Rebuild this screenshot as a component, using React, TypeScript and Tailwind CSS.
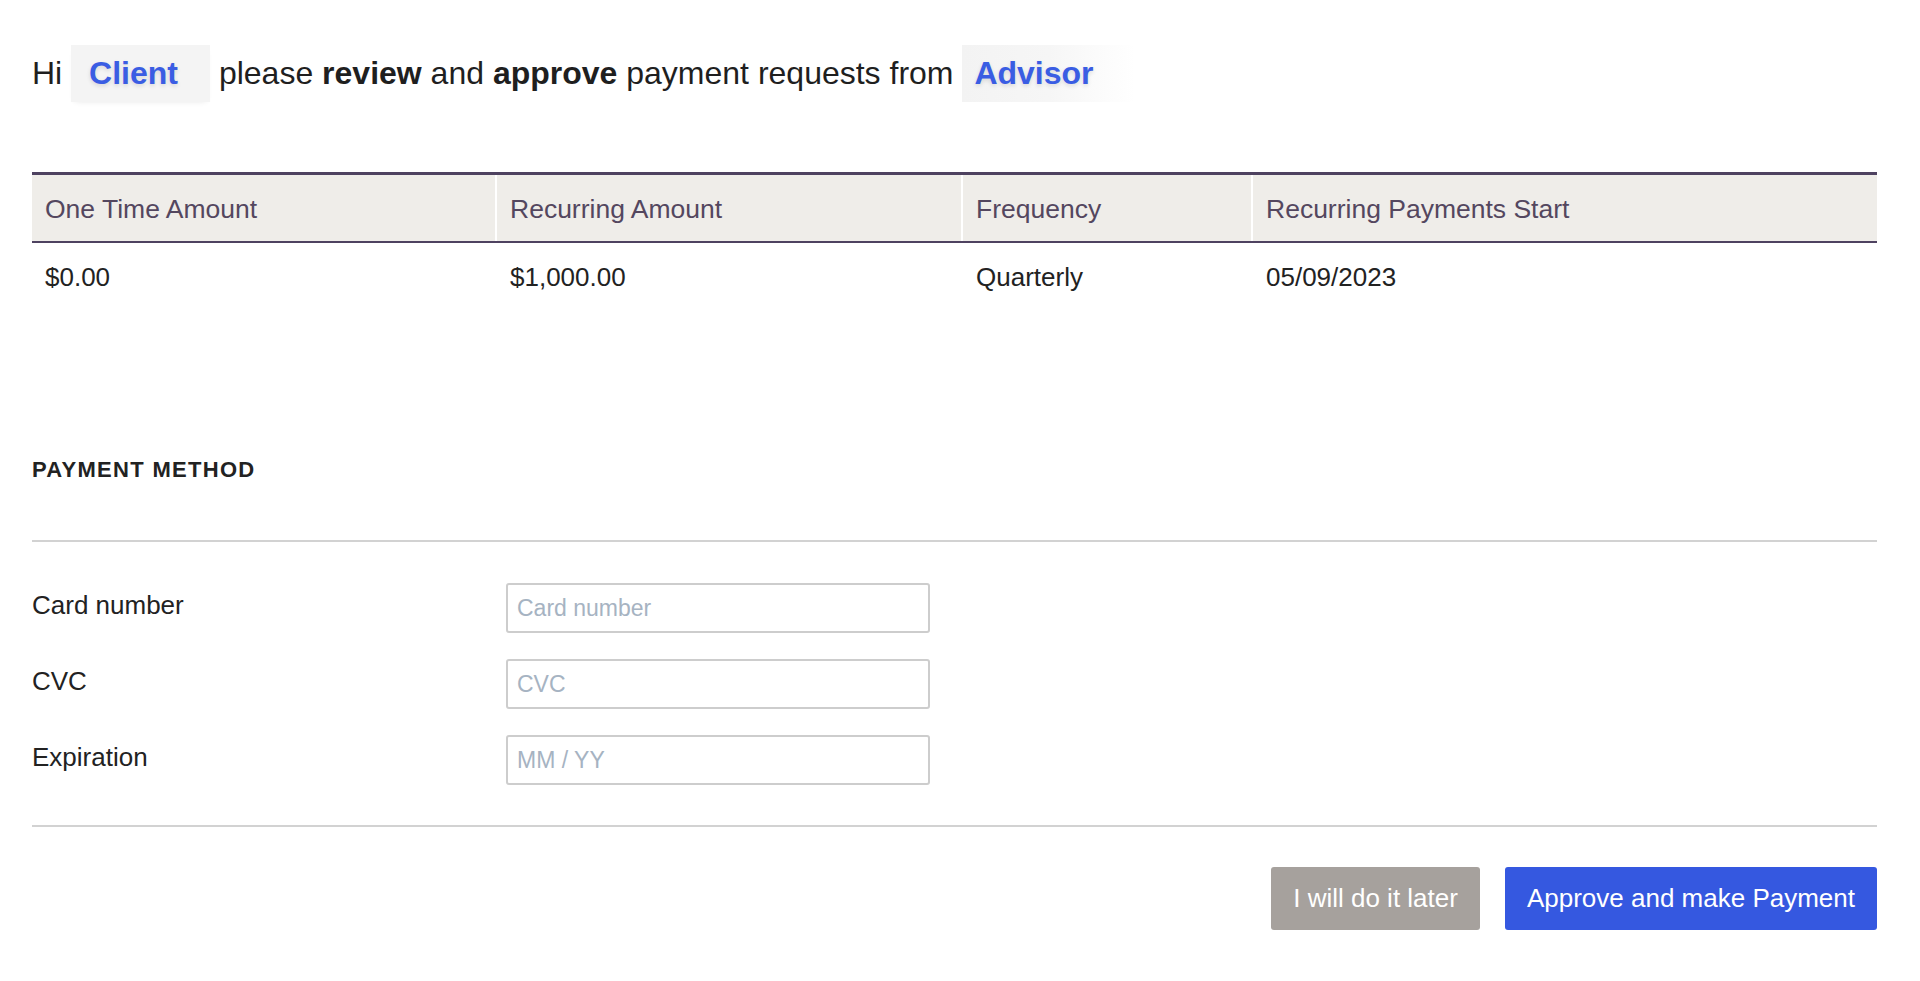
import React from 'react'

const columns = [
  { label: 'One Time Amount', value: '$0.00', width: 'w-[465px]' },
  { label: 'Recurring Amount', value: '$1,000.00', width: 'w-[466px]' },
  { label: 'Frequency', value: 'Quarterly', width: 'w-[290px]' },
  { label: 'Recurring Payments Start', value: '05/09/2023', width: 'flex-1' },
]

const fields = [
  { label: 'Card number', placeholder: 'Card number' },
  { label: 'CVC', placeholder: 'CVC' },
  { label: 'Expiration', placeholder: 'MM / YY' },
]

export default function App() {
  return (
    <div className="min-h-screen bg-white pl-[32px] text-[#1f1f1f] font-['Liberation_Sans',Arial,sans-serif]">
      <div className="w-[1845px]">
        {/* Greeting */}
        <div className="pt-[45px] flex items-center text-[32px] leading-[57px] whitespace-pre">
          <span>Hi </span>
          <span className="bg-[#f4f4f4] pl-[18px] pr-[32px] font-bold text-[#3a5de3] shadow-[0_3px_6px_-4px_rgba(0,0,0,0.12)] [text-shadow:0_2px_4px_rgba(0,0,0,0.12)]">
            Client
          </span>
          <span> please <b>review</b> and <b>approve</b> payment requests from </span>
          <span className="bg-gradient-to-r from-[#f3f3f3] via-[#f6f6f6] to-white pl-[12px] pr-[41px] font-bold text-[#3a5de3] [text-shadow:0_2px_4px_rgba(0,0,0,0.12)]">
            Advisor
          </span>
        </div>

        {/* Payment request table */}
        <div className="mt-[70px]">
          <div className="flex border-t-[3px] border-b-[2px] border-[#4e4260] bg-[#efede9] text-[#54475f] text-[26.5px] h-[71px]">
            {columns.map((c, i) => (
              <div
                key={c.label}
                className={`${c.width} flex items-center pl-[13px] pt-[3px] ${i < columns.length - 1 ? 'border-r-2 border-white' : ''}`}
              >
                {c.label}
              </div>
            ))}
          </div>
          <div className="flex h-[68px] text-[26px] text-[#222]">
            {columns.map((c) => (
              <div key={c.label} className={`${c.width} flex items-center pl-[13px]`}>
                {c.value}
              </div>
            ))}
          </div>
        </div>

        {/* Payment method */}
        <div className="mt-[147px] text-[22px] leading-[24px] font-bold tracking-[1.3px] text-[#222]">
          PAYMENT METHOD
        </div>
        <div className="mt-[58px] h-[2px] bg-[#d2d2d2]" />

        <div className="mt-[41px] flex flex-col gap-[26px]">
          {fields.map((f) => (
            <div key={f.label} className="flex items-center">
              <label className="w-[474px] text-[26px] text-[#222] -mt-[6px]">{f.label}</label>
              <input
                placeholder={f.placeholder}
                className="w-[424px] h-[50px] border-2 border-[#cdcdcd] rounded-[3px] pl-[9px] text-[23px] outline-none placeholder:text-[#a6b3c2]"
              />
            </div>
          ))}
        </div>

        <div className="mt-[40px] h-[2px] bg-[#d2d2d2]" />

        <div className="mt-[40px] flex justify-end gap-[25px] text-[26px]">
          <button className="h-[63px] px-[22px] rounded-[3px] bg-[#a6a19d] text-white">
            I will do it later
          </button>
          <button className="h-[63px] px-[22px] rounded-[3px] bg-[#3558e0] text-white">
            Approve and make Payment
          </button>
        </div>
      </div>
    </div>
  )
}
